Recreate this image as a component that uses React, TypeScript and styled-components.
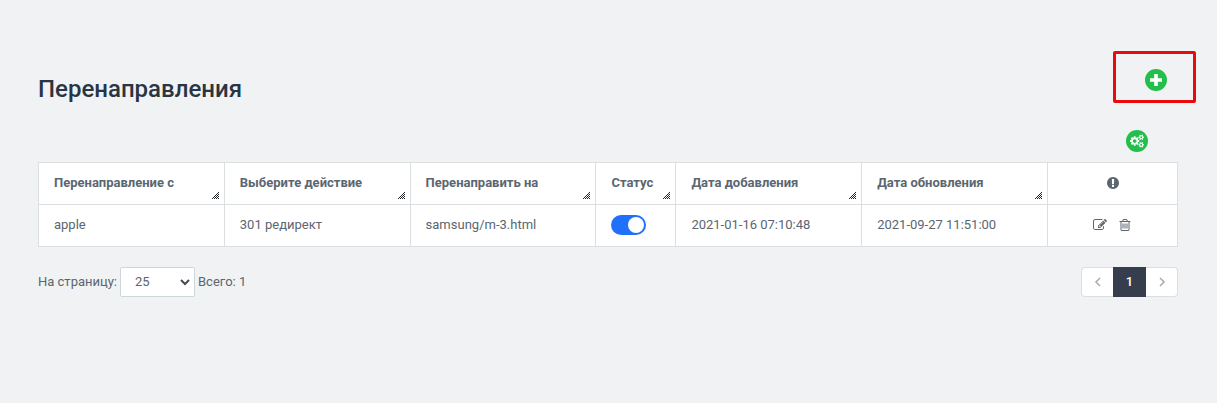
import React, { useState } from "react";
import styled, { createGlobalStyle } from "styled-components";

const GlobalStyle = createGlobalStyle`
  *, *::before, *::after { box-sizing: border-box; }
  body {
    margin: 0;
    background: #f0f2f4;
    color: #5b6670;
    font: 400 13px/20px Roboto, "Noto Sans", sans-serif;
  }
  button, select, input { font: inherit; color: inherit; margin: 0; }
`;

const Page = styled.main`
  padding: 51px 39px 32px 38px;
`;

const Header = styled.header`
  display: flex;
  align-items: center;
  justify-content: space-between;
  height: 75px;
`;

const Title = styled.h1`
  margin: 0;
  color: #293543;
  font-size: 24px;
  font-weight: 500;
  line-height: 32px;
`;

const AddArea = styled.div`
  position: relative;
  align-self: flex-start;
  padding: 18px 11px;
`;

const Highlight = styled.span`
  position: absolute;
  top: 0;
  right: -18px;
  width: 83px;
  height: 52px;
  border: 3px solid #ea0a0e;
  border-radius: 2px;
  pointer-events: none;
`;

const RoundButton = styled.button`
  display: flex;
  align-items: center;
  justify-content: center;
  width: 22px;
  height: 22px;
  padding: 0;
  border: 0;
  border-radius: 50%;
  background: #22bf4b;
  color: #fff;
  cursor: pointer;
`;

const Tools = styled.div`
  display: flex;
  justify-content: flex-end;
  padding: 4px 30px 10px;
`;

const Table = styled.table`
  width: 100%;
  table-layout: fixed;
  border-collapse: collapse;
  background: #fff;
`;

const Col = styled.col<{ $width?: number }>`
  width: ${(p) => (p.$width ? `${p.$width}px` : "auto")};
`;

const HeadCell = styled.th`
  height: 42px;
  padding: 0;
  border: 1px solid #dcdfdf;
  font-weight: 700;
  text-align: left;
`;

const HeadContent = styled.div<{ $center?: boolean }>`
  display: flex;
  justify-content: ${(p) => (p.$center ? "center" : "space-between")};
  height: 41px;
  padding: ${(p) => (p.$center ? "0" : "0 5px 0 15px")};
  line-height: 40px;

  > svg { margin-top: 13px; }
`;

const Grip = styled.svg`
  && {
    align-self: flex-end;
    margin: 0 0 5px;
  }
  cursor: col-resize;
`;

const Cell = styled.td`
  height: 42px;
  padding: 0 15px 2px;
  border: 1px solid #dcdfdf;
  white-space: nowrap;
`;

const Switch = styled.input`
  display: block;
  appearance: none;
  width: 35px;
  height: 20px;
  padding: 2px;
  border-radius: 10px;
  background: #c3c9ce;
  cursor: pointer;

  &::before {
    content: "";
    display: block;
    width: 16px;
    height: 16px;
    border-radius: 50%;
    background: #fff;
  }
  &:checked { background: #2070fb; }
  &:checked::before { margin-left: 15px; }
`;

const Actions = styled.div`
  display: flex;
  justify-content: center;
  gap: 11px;
`;

const IconButton = styled.button`
  display: flex;
  padding: 0;
  border: 0;
  background: none;
  cursor: pointer;
`;

const Footer = styled.footer`
  display: flex;
  align-items: center;
  justify-content: space-between;
  margin-top: 20px;
`;

const PageSize = styled.div`
  display: flex;
  align-items: center;
  gap: 3px;
`;

const SelectBox = styled.div`
  display: grid;
  align-items: center;
  width: 75px;
  height: 30px;

  > * { grid-area: 1 / 1; }
  > svg { justify-self: end; margin-right: 5px; pointer-events: none; }
`;

const Select = styled.select`
  appearance: none;
  width: 100%;
  height: 30px;
  padding: 0 14px;
  border: 1px solid #ccd7dd;
  border-radius: 2px;
  background: #fff;
`;

const Pagination = styled.nav`
  display: flex;
  height: 30px;
`;

const PageButton = styled.button<{ $active?: boolean; $side?: "left" | "right" }>`
  display: flex;
  align-items: center;
  justify-content: center;
  width: ${(p) => (p.$active ? 33 : 32)}px;
  padding: 0;
  border: 1px solid ${(p) => (p.$active ? "#363d4d" : "#dcdfe1")};
  border-radius: ${(p) => (p.$side === "left" ? "4px 0 0 4px" : p.$side === "right" ? "0 4px 4px 0" : "0")};
  ${(p) => p.$side === "left" && "border-right: 0;"}
  ${(p) => p.$side === "right" && "border-left: 0;"}
  background: ${(p) => (p.$active ? "#363d4d" : "#fff")};
  color: ${(p) => (p.$active ? "#fff" : "#a5abb0")};
  font-weight: 500;
  cursor: pointer;
`;

const ICONS = {
  cogs: "M896 896q0-106-75-181t-181-75-181 75-75 181 75 181 181 75 181-75 75-181zm768 512q0-52-38-90t-90-38-90 38-38 90q0 53 37.5 90.500t90.500 37.500 90.500-37.500 37.500-90.500zm0-1024q0-52-38-90t-90-38-90 38-38 90q0 53 37.500 90.500t90.500 37.500 90.500-37.500 37.500-90.500zm-384 421v185q0 10-7 19.500t-16 10.500l-155 24q-11 35-32 76 34 48 90 115 7 11 7 20 0 12-7 19-23 30-82.500 89.500t-78.500 59.500q-11 0-21-7l-115-90q-37 19-77 31-11 108-23 155-7 24-30 24h-186q-11 0-20-7.500t-10-17.500l-23-153q-34-10-75-31l-118 89q-7 7-20 7-11 0-21-8-144-133-144-160 0-9 7-19 10-14 41-53t47-61q-23-44-35-82l-152-24q-10-1-17-9.500t-7-19.500v-185q0-10 7-19.500t16-10.500l155-24q11-35 32-76-34-48-90-115-7-11-7-20 0-12 7-20 22-30 82-89t79-59q11 0 21 7l115 90q34-18 77-32 11-108 23-154 7-24 30-24h186q11 0 20 7.500t10 17.500l23 153q34 10 75 31l118-89q8-7 20-7 11 0 21 8 144 133 144 160 0 8-7 19-12 16-42 54t-45 60q23 48 34 82l152 23q10 2 17 10.500t7 19.500zm640 533v140q0 16-149 31-12 27-30 52 51 113 51 138 0 4-4 7-122 71-124 71-8 0-46-47t-52-68q-20 2-30 2t-30-2q-14 21-52 68t-46 47q-2 0-124-71-4-3-4-7 0-25 51-138-18-25-30-52-149-15-149-31v-140q0-16 149-31 13-29 30-52-51-113-51-138 0-4 4-7 4-2 35-20t59-34 30-16q8 0 46 46.500t52 67.500q20-2 30-2t30 2q51-71 92-112l6-2q4 0 124 70 4 3 4 7 0 25-51 138 17 23 30 52 149 15 149 31zm0-1024v140q0 16-149 31-12 27-30 52 51 113 51 138 0 4-4 7-122 71-124 71-8 0-46-47t-52-68q-20 2-30 2t-30-2q-14 21-52 68t-46 47q-2 0-124-71-4-3-4-7 0-25 51-138-18-25-30-52-149-15-149-31v-140q0-16 149-31 13-29 30-52-51-113-51-138 0-4 4-7 4-2 35-20t59-34 30-16q8 0 46 46.500t52 67.500q20-2 30-2t30 2q51-71 92-112l6-2q4 0 124 70 4 3 4 7 0 25-51 138 17 23 30 52 149 15 149 31z",
  alert: "M896 128q209 0 385.5 103t279.5 279.5 103 385.5-103 385.5-279.5 279.5-385.5 103-385.5-103-279.5-279.5-103-385.5 103-385.5 279.5-279.5 385.5-103zm128 1247v-190q0-14-9-23.5t-22-9.5h-192q-13 0-23 10t-10 23v190q0 13 10 23t23 10h192q13 0 22-9.5t9-23.5zm-2-344l18-621q0-12-10-18-10-8-24-8h-220q-14 0-24 8-10 6-10 18l17 621q0 10 10 17.5t24 7.5h185q14 0 23.5-7.5t10.5-17.5z",
  edit: "M888 1184l116-116-152-152-116 116v56h96v96h56zm440-720q-16-16-33 1l-350 350q-17 17-1 33t33-1l350-350q17-17 1-33zm80 594v190q0 119-84.5 203.5t-203.5 84.5h-832q-119 0-203.5-84.5t-84.5-203.5v-832q0-119 84.5-203.5t203.5-84.5h832q63 0 117 25 15 7 18 23 3 17-9 29l-49 49q-14 14-32 8-23-6-45-6h-832q-66 0-113 47t-47 113v832q0 66 47 113t113 47h832q66 0 113-47t47-113v-126q0-13 9-22l64-64q15-15 35-7t20 29zm-96-738l288 288-672 672h-288v-288zm444 132l-92 92-288-288 92-92q28-28 68-28t68 28l152 152q28 28 28 68t-28 68z",
  trash: "M704 736v576q0 14-9 23t-23 9h-64q-14 0-23-9t-9-23v-576q0-14 9-23t23-9h64q14 0 23 9t9 23zm256 0v576q0 14-9 23t-23 9h-64q-14 0-23-9t-9-23v-576q0-14 9-23t23-9h64q14 0 23 9t9 23zm256 0v576q0 14-9 23t-23 9h-64q-14 0-23-9t-9-23v-576q0-14 9-23t23-9h64q14 0 23 9t9 23zm128 724v-948h-896v948q0 22 7 40.5t14.5 27 10.5 8.5h832q3 0 10.5-8.5t14.5-27 7-40.5zm-672-1076h448l-48-117q-7-9-17-11h-317q-10 2-17 11zm928 32v64q0 14-9 23t-23 9h-96v948q0 83-47 143.5t-113 60.5h-832q-66 0-113-58.5t-47-141.5v-952h-96q-14 0-23-9t-9-23v-64q0-14 9-23t23-9h309l70-167q15-37 54-63t79-26h320q40 0 79 26t54 63l70 167h309q14 0 23 9t9 23z",
};

function Icon({ name, size, wide }: { name: keyof typeof ICONS; size: number; wide?: boolean }) {
  return (
    <svg width={size} height={size} viewBox={wide ? "0 0 1920 1792" : "0 0 1792 1792"} fill="currentColor" aria-hidden="true">
      <path d={ICONS[name]} />
    </svg>
  );
}

function Plus() {
  return (
    <svg width="12" height="12" viewBox="0 0 12 12" fill="currentColor" aria-hidden="true">
      <path d="M4.200 0h3.600v4.200H12v3.600H7.800V12H4.200V7.800H0V4.200h4.200z" />
    </svg>
  );
}

function Chevron({ d }: { d: string }) {
  return (
    <svg width="10" height="10" viewBox="0 0 10 10" fill="none" stroke="currentColor" strokeWidth="1.5" aria-hidden="true">
      <path d={d} />
    </svg>
  );
}

// Checkered lower-right triangle in the corner of resizable header cells.
const GRIP_SIZE = 7;
const GRIP_PATH = Array.from({ length: GRIP_SIZE * GRIP_SIZE }, (_, i) => [i % GRIP_SIZE, Math.floor(i / GRIP_SIZE)])
  .filter(([x, y]) => x + y >= GRIP_SIZE - 1 && (x + y) % 2 === 0)
  .map(([x, y]) => `M${x} ${y}h1v1h-1z`)
  .join("");

function ResizeGrip() {
  return (
    <Grip width={GRIP_SIZE} height={GRIP_SIZE} fill="#23272b" shapeRendering="crispEdges" aria-hidden="true">
      <path d={GRIP_PATH} />
    </Grip>
  );
}

const COLUMNS: { label: string; width?: number }[] = [
  { label: "Перенаправление с" },
  { label: "Выберите действие" },
  { label: "Перенаправить на" },
  { label: "Статус", width: 80 },
  { label: "Дата добавления" },
  { label: "Дата обновления" },
];

const ROWS = [
  {
    from: "apple",
    action: "301 редирект",
    to: "samsung/m-3.html",
    enabled: true,
    added: "2021-01-16 07:10:48",
    updated: "2021-09-27 11:51:00",
  },
];

export default function App() {
  const [enabled, setEnabled] = useState(ROWS.map((r) => r.enabled));
  const toggle = (index: number) => setEnabled(enabled.map((v, i) => (i === index ? !v : v)));

  return (
    <>
      <GlobalStyle />
      <Page>
        <Header>
          <Title>Перенаправления</Title>
          <AddArea>
            <RoundButton type="button" aria-label="Добавить">
              <Plus />
            </RoundButton>
            <Highlight />
          </AddArea>
        </Header>
        <Tools>
          <RoundButton type="button" aria-label="Настройки">
            <Icon name="cogs" size={14} wide />
          </RoundButton>
        </Tools>
        <Table>
          <colgroup>
            {COLUMNS.map((c) => (
              <Col key={c.label} $width={c.width} />
            ))}
            <Col $width={130} />
          </colgroup>
          <thead>
            <tr>
              {COLUMNS.map((c) => (
                <HeadCell key={c.label} scope="col">
                  <HeadContent>
                    {c.label}
                    <ResizeGrip />
                  </HeadContent>
                </HeadCell>
              ))}
              <HeadCell scope="col" aria-label="Действия">
                <HeadContent $center>
                  <Icon name="alert" size={14} />
                </HeadContent>
              </HeadCell>
            </tr>
          </thead>
          <tbody>
            {ROWS.map((r, i) => (
              <tr key={r.from}>
                <Cell>{r.from}</Cell>
                <Cell>{r.action}</Cell>
                <Cell>{r.to}</Cell>
                <Cell>
                  <Switch type="checkbox" aria-label="Статус" checked={enabled[i]} onChange={() => toggle(i)} />
                </Cell>
                <Cell>{r.added}</Cell>
                <Cell>{r.updated}</Cell>
                <Cell>
                  <Actions>
                    <IconButton type="button" aria-label="Редактировать">
                      <Icon name="edit" size={14} />
                    </IconButton>
                    <IconButton type="button" aria-label="Удалить">
                      <Icon name="trash" size={14} />
                    </IconButton>
                  </Actions>
                </Cell>
              </tr>
            ))}
          </tbody>
        </Table>
        <Footer>
          <PageSize>
            <label htmlFor="page-size">На страницу:</label>
            <SelectBox>
              <Select id="page-size" defaultValue="25">
                <option>25</option>
                <option>50</option>
                <option>100</option>
              </Select>
              <svg width="10" height="8" viewBox="0 0 10 8" fill="none" stroke="#444b52" strokeWidth="2" aria-hidden="true">
                <path d="M1 2l4 4 4-4" />
              </svg>
            </SelectBox>
            <span>Всего: 1</span>
          </PageSize>
          <Pagination aria-label="Страницы">
            <PageButton type="button" $side="left" aria-label="Назад">
              <Chevron d="M7 1L3 5l4 4" />
            </PageButton>
            <PageButton type="button" $active aria-current="page">
              1
            </PageButton>
            <PageButton type="button" $side="right" aria-label="Вперёд">
              <Chevron d="M3 1l4 4-4 4" />
            </PageButton>
          </Pagination>
        </Footer>
      </Page>
    </>
  );
}
